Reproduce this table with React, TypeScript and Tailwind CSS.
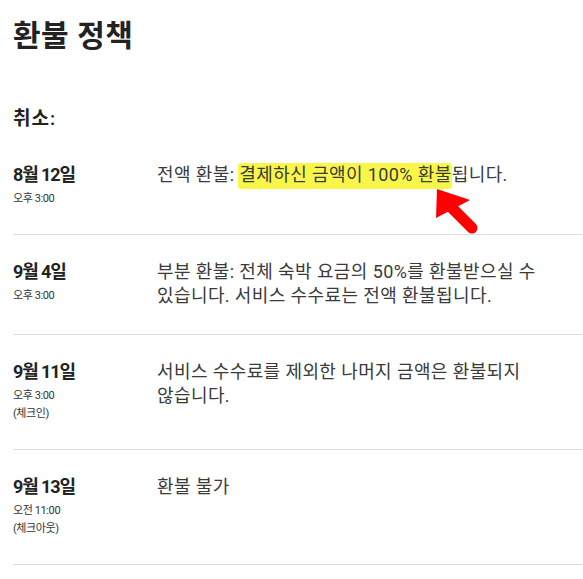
import React from "react";

const rows = [
  {
    date: "8월 12일",
    times: ["오후 3:00"],
    desc: (
      <>
        전액 환불:{" "}
        <span className="bg-[#f9f64a] rounded-[3px] pt-[1px] pb-[4px] -ml-[1px] pl-[1px]">결제하신 금액이 100% 환불</span>
        됩니다.
      </>
    ),
  },
  {
    date: "9월 4일",
    times: ["오후 3:00"],
    desc: "부분 환불: 전체 숙박 요금의 50%를 환불받으실 수 있습니다. 서비스 수수료는 전액 환불됩니다.",
  },
  {
    date: "9월 11일",
    times: ["오후 3:00", "(체크인)"],
    desc: "서비스 수수료를 제외한 나머지 금액은 환불되지 않습니다.",
  },
  {
    date: "9월 13일",
    times: ["오전 11:00", "(체크아웃)"],
    desc: "환불 불가",
  },
];

export default function App() {
  return (
    <div
      className="relative w-[583px] h-[579px] overflow-hidden bg-white pl-[13px] pt-[18px] text-[#222222]"
      style={{ fontFamily: "Roboto, 'Noto Sans CJK KR', sans-serif" }}
    >
      <h1 className="text-[30px] leading-[36px] font-bold tracking-[0.5px]">환불 정책</h1>
      <h2 className="mt-[53px] text-[19px] leading-[24px] font-semibold tracking-[1px]">취소:</h2>
      <div className="mt-[7px]">
        {rows.map((r, i) => (
          <div key={i} className="flex pt-[25px] pb-[26px] border-b border-[#dddddd]">
            <div className="w-[144px] shrink-0">
              <div className="text-[18px] leading-[24px] font-bold tracking-[-1.1px]">{r.date}</div>
              <div className="mt-[3px] text-[11px] leading-[18px] text-[#333333] tracking-[-0.4px]">
                {r.times.map((t, j) => (
                  <div key={j}>{t}</div>
                ))}
              </div>
            </div>
            <div className="w-[405px] text-[18px] leading-[24px] text-[#3a3a3a] tracking-[0.4px] break-keep">{r.desc}</div>
          </div>
        ))}
      </div>
      <svg
        className="absolute left-[430px] top-[183px]"
        width="52"
        height="56"
        viewBox="0 0 52 56"
      >
        <line x1="22" y1="25" x2="42" y2="45" stroke="#ff0000" strokeWidth="11" strokeLinecap="round" />
        <polygon points="7,6 6,35 40,17" fill="#ff0000" />
      </svg>
    </div>
  );
}
